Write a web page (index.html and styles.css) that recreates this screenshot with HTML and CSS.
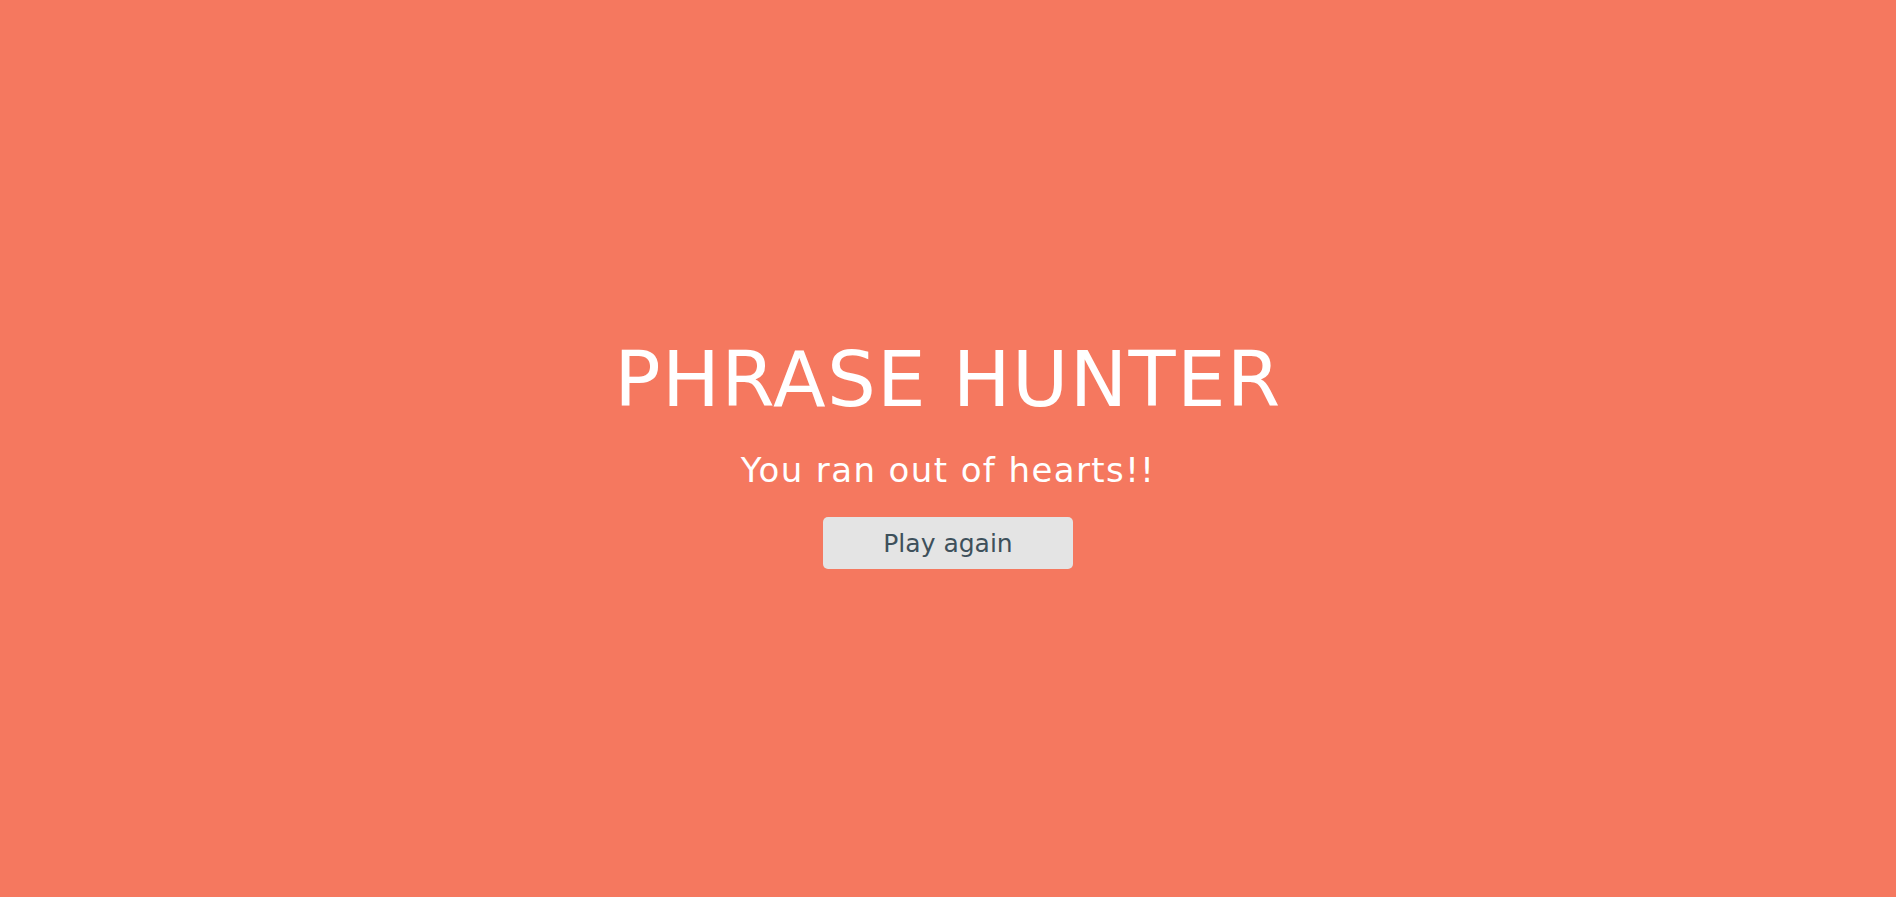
FILE: index.html
```html
<!DOCTYPE html>
<html lang="en">
<head>
<meta charset="utf-8">
<title>Phrase Hunter</title>
<link rel="stylesheet" href="styles.css">
</head>
<body>
<div class="overlay lose">
  <h2 class="title">PHRASE HUNTER</h2>
  <h1 class="game-over-message">You ran out of hearts!!</h1>
  <button class="btn-reset" type="button">Play again</button>
</div>
</body>
</html>
```

FILE: styles.css
```css
html, body {
  margin: 0;
  padding: 0;
  height: 100%;
}
body {
  font-family: "DejaVu Sans", "Noto Sans", sans-serif;
  background: #f5785f;
}
.overlay {
  box-sizing: border-box;
  height: 100vh;
  display: flex;
  flex-direction: column;
  align-items: center;
  justify-content: center;
  padding-top: 11px;
  background: #f5785f;
  color: #ffffff;
}
.title {
  margin: 2px 0 0;
  font-size: 77px;
  font-weight: 400;
  line-height: 1;
  letter-spacing: 1.3px;
}
.game-over-message {
  margin: 35px 0 0;
  font-size: 34px;
  font-weight: 400;
  line-height: 1;
  letter-spacing: 1.4px;
}
.btn-reset {
  margin-top: 30px;
  width: 250px;
  height: 52px;
  padding: 0;
  border: none;
  border-radius: 5px;
  background: #e4e4e4;
  color: #3e505b;
  font-family: inherit;
  font-size: 25px;
  line-height: 1;
  cursor: pointer;
}
```
